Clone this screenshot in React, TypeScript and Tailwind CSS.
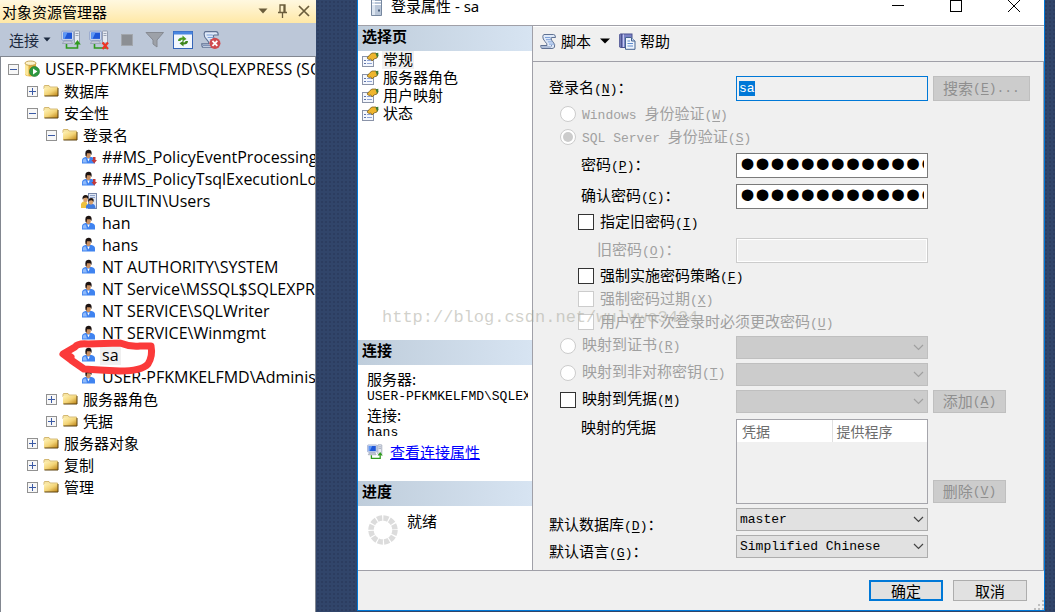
import React, { useEffect, useRef } from 'react';

const MONO = "font-['Liberation_Mono','Noto_Sans_CJK_SC',monospace] text-[13px]";

type NodeKind = 'server' | 'folder' | 'login' | 'lockedLogin' | 'group';

interface TreeNode {
  id: string;
  label: string;
  kind: NodeKind;
  level: number;
  open?: boolean;
  selected?: boolean;
}

const TREE: TreeNode[] = [
  { id: 'root', label: 'USER-PFKMKELFMD\\SQLEXPRESS (SQ', kind: 'server', level: 0, open: true },
  { id: 'db', label: '数据库', kind: 'folder', level: 1, open: false },
  { id: 'sec', label: '安全性', kind: 'folder', level: 1, open: true },
  { id: 'logins', label: '登录名', kind: 'folder', level: 2, open: true },
  { id: 'l1', label: '##MS_PolicyEventProcessing', kind: 'lockedLogin', level: 3 },
  { id: 'l2', label: '##MS_PolicyTsqlExecutionLo', kind: 'lockedLogin', level: 3 },
  { id: 'l3', label: 'BUILTIN\\Users', kind: 'group', level: 3 },
  { id: 'l4', label: 'han', kind: 'login', level: 3 },
  { id: 'l5', label: 'hans', kind: 'login', level: 3 },
  { id: 'l6', label: 'NT AUTHORITY\\SYSTEM', kind: 'login', level: 3 },
  { id: 'l7', label: 'NT Service\\MSSQL$SQLEXPR', kind: 'login', level: 3 },
  { id: 'l8', label: 'NT SERVICE\\SQLWriter', kind: 'login', level: 3 },
  { id: 'l9', label: 'NT SERVICE\\Winmgmt', kind: 'login', level: 3 },
  { id: 'l10', label: 'sa', kind: 'login', level: 3, selected: true },
  { id: 'l11', label: 'USER-PFKMKELFMD\\Adminis', kind: 'login', level: 3 },
  { id: 'roles', label: '服务器角色', kind: 'folder', level: 2, open: false },
  { id: 'cred', label: '凭据', kind: 'folder', level: 2, open: false },
  { id: 'objects', label: '服务器对象', kind: 'folder', level: 1, open: false },
  { id: 'repl', label: '复制', kind: 'folder', level: 1, open: false },
  { id: 'mgmt', label: '管理', kind: 'folder', level: 1, open: false },
];

const INDENT = ['pl-[7px]', 'pl-[26px]', 'pl-[45px]', 'pl-20'];

/* ---------- icons ---------- */

function FolderIcon() {
  return (
    <svg width="16" height="16" viewBox="0 0 16 16" className="shrink-0">
      <defs>
        <linearGradient id="folder" x1="0" y1="0" x2="1" y2="1">
          <stop offset="0" stopColor="#fff3b8" />
          <stop offset="0.5" stopColor="#f3d477" />
          <stop offset="1" stopColor="#b97f10" />
        </linearGradient>
      </defs>
      <path d="M1 3.5 L1.5 2.5 H6 L7 4 H14.5 V6 H1 Z" fill="#f6e3a0" stroke="#c9a95a" strokeWidth="0.8" />
      <rect x="1" y="4.8" width="14" height="8.2" rx="0.5" fill="url(#folder)" />
      <path d="M1.5 13 H15 V5" fill="none" stroke="#5c4310" strokeWidth="1" />
    </svg>
  );
}

function LoginIcon({ locked = false }: { locked?: boolean }) {
  return (
    <svg width="16" height="16" viewBox="0 0 16 16" className="shrink-0">
      <path d="M1 14.5 V11.5 Q1 8.6 4.5 8 H10.5 Q14 8.6 14 11.5 V14.5 Z" fill="#3f83f0" />
      <path d="M1.8 13.5 V11.5 Q2 9.6 4.5 9.2 L6 13.5 Z" fill="#8fbafa" />
      <path d="M6.3 9.5 L7.5 12.5 L8.7 9.5 Z" fill="#ffffff" />
      <ellipse cx="7.3" cy="5.8" rx="2.5" ry="3.4" fill="#c98f60" />
      <path d="M4.6 7 Q3.4 0.8 7.5 0.8 Q11.4 0.8 10.5 6 L9.2 4.2 L6 4.2 L5.5 7.5 Z" fill="#1c1210" />
      {locked && <path d="M12 8 H14.5 V11 H16 L13.2 14.5 L10.5 11 H12 Z" fill="#c13a3a" />}
    </svg>
  );
}

function GroupIcon() {
  return (
    <svg width="16" height="16" viewBox="0 0 16 16" className="shrink-0">
      <rect x="7.5" y="0.5" width="8" height="15" fill="#dfe7f5" stroke="#7686a8" />
      <path d="M9 2.5 H14 M9 4.5 H14" stroke="#8ea2c8" />
      <path d="M0 15 V11 Q1 8 5 8 L8 15 Z" fill="#eec23f" />
      <ellipse cx="4.5" cy="6" rx="2.3" ry="3.2" fill="#d9a06c" />
      <path d="M1.5 6.5 Q1 2 4.7 2 Q8 2 7.2 6 L5.5 4.6 L3 5 Z" fill="#201510" />
      <path d="M5 15.5 V13 Q5.5 11 8 11 H12 Q14.5 11.5 14.5 15.5 Z" fill="#3f7be0" />
      <ellipse cx="10" cy="8.8" rx="2.2" ry="2.8" fill="#d9a06c" />
      <path d="M7.2 9 Q7 5 10.2 5 Q13.4 5.2 12.5 9 L11 7.2 L8.6 7.4 Z" fill="#201510" />
    </svg>
  );
}

function ServerIcon() {
  return (
    <svg width="16" height="18" viewBox="0 0 16 18" className="shrink-0">
      <path d="M1 3.2 V14 Q1 16.5 6.5 16.5 Q12 16.5 12 14 V3.2 Z" fill="#dfae3c" />
      <path d="M1 3.2 V14 Q1.5 15.6 4.5 16 V5 Z" fill="#fbe79a" />
      <ellipse cx="6.5" cy="3.2" rx="5.5" ry="2.2" fill="#fdf3cc" stroke="#b9923a" strokeWidth="0.8" />
      <circle cx="10.5" cy="11.5" r="5" fill="#2e9a3f" stroke="#1f7330" strokeWidth="0.6" />
      <path d="M9 8.6 L13.4 11.5 L9 14.4 Z" fill="#ffffff" />
    </svg>
  );
}

function ComputersIcon({ mode, size = 20 }: { mode: 'connect' | 'disconnect'; size?: number }) {
  return (
    <svg width={size} height={size} viewBox="0 0 20 20" className="shrink-0">
      <rect x="13.5" y="1" width="5" height="12" rx="0.6" fill="#e6eaf2" stroke="#8690a5" strokeWidth="0.8" />
      <path d="M14.5 3.5 H17.5 M14.5 5.5 H17.5" stroke="#8690a5" strokeWidth="0.8" />
      <rect x="0.8" y="1.2" width="11.5" height="9" rx="0.8" fill="#dfe6f4" stroke="#7f93c5" strokeWidth="0.8" />
      <rect x="2.2" y="2.5" width="8.8" height="6.4" fill="#1e56d8" />
      <path d="M2.2 2.5 H6.5 L3.5 8.9 H2.2 Z" fill="#5f97f5" />
      <path d="M3 11 H10 L11.5 13.5 H1.5 Z" fill="#c5cbd9" stroke="#8690a5" strokeWidth="0.6" />
      <path d="M5.5 14 V18 H16.5 V14" fill="none" stroke="#2f9a1e" strokeWidth="1.6" />
      {mode === 'connect' ? (
        <path d="M16.5 10 L19.8 14.5 H13.2 Z" fill="#2f9a1e" />
      ) : (
        <path d="M13.5 12.5 L19 19 M19 12.5 L13.5 19" stroke="#ee3424" strokeWidth="2.2" />
      )}
    </svg>
  );
}

function RefreshIcon() {
  return (
    <svg width="20" height="20" viewBox="0 0 20 20">
      <rect x="0.5" y="1.5" width="19" height="17" fill="#f3f7fd" stroke="#3565b8" />
      <rect x="0.5" y="1.5" width="19" height="3" fill="#4a86e0" />
      <path d="M5 11 Q5 7.5 9.5 7.5 V5.5 L13.5 9 L9.5 11.5 V9.5 Q7.5 9.5 7.5 11 Z" fill="#4b9b22" />
      <path d="M15 11 Q15 14.6 10.5 14.6 V16.6 L6.5 13.2 L10.5 10.8 V12.6 Q12.5 12.6 12.5 11 Z" fill="#3c8418" />
    </svg>
  );
}

function ScrollPaths() {
  return (
    <>
      <path
        d="M4 1.5 H13.5 Q15.5 1.5 15.5 4.5 H12 L11 5 Q11 7 13 9 Q15.5 11.5 14.5 14 Q14 15.5 12 15.5 H2 Q0.7 15.5 0.7 12.5 H7 Q7.5 11 5 8.5 Q2.6 6 2.8 3.5 Q3 1.7 4 1.5 Z"
        fill="#dfe9f8"
        stroke="#5f7192"
      />
      <path d="M5 4.5 H10.5 M6 6.7 H11 M7.8 8.9 H12.6 M9 11.1 H14" stroke="#7da0d8" />
      <path d="M1.5 14 H10.5 Q12 13.5 11.5 12" fill="none" stroke="#7f93b8" />
    </>
  );
}

function ScriptIcon() {
  return (
    <svg width="17" height="17" viewBox="0 0 17 17" className="shrink-0">
      <ScrollPaths />
    </svg>
  );
}

function CancelScriptIcon() {
  return (
    <svg width="20" height="20" viewBox="0 0 18 18">
      <ScrollPaths />
      <circle cx="12.5" cy="12" r="5" fill="#cf4a4f" />
      <path d="M10.3 9.8 L14.7 14.2 M14.7 9.8 L10.3 14.2" stroke="#ffffff" strokeWidth="1.6" />
    </svg>
  );
}

function HelpIcon() {
  return (
    <svg width="17" height="17" viewBox="0 0 17 17" className="shrink-0">
      <path d="M0.5 1.5 L2 0.8 V14.6 L0.5 14 Z" fill="#8d93cf" stroke="#4b5290" strokeWidth="0.8" />
      <rect x="2.5" y="1" width="10.5" height="13.5" fill="#7b82c6" stroke="#4b5290" />
      <path d="M4.5 1.5 V14" stroke="#c3c8ee" />
      <path d="M6.5 4.5 H12.5 L16 8 V16.3 H6.5 Z" fill="#eef4fd" stroke="#44628f" />
      <path d="M12.5 4.5 V8 H16" fill="#c6d8f2" stroke="#44628f" />
      <path d="M8.5 8 H11 M8.5 10.5 H14 M8.5 13 H14" stroke="#5f8acb" />
    </svg>
  );
}

function PageIcon() {
  return (
    <svg width="17" height="16" viewBox="0 0 17 16" className="shrink-0">
      <rect x="0.5" y="4.5" width="11" height="10" fill="#f4f7fd" stroke="#8a93a8" />
      <path d="M2 8.5 H4 M2 11.5 H4" stroke="#5f74a8" />
      <path d="M5 8.5 H10 M5 11.5 H10" stroke="#8fa4d4" />
      <path d="M5 6 L8 2.5 L10 1 H14 L16 3 L15 6 L12 7 L10 9 L9 7 L7 7.5 Z" fill="#efb52e" stroke="#6f5312" strokeWidth="0.7" />
      <path d="M13.5 1.2 L16.3 0.8 V4.2 L15 5.5 Z" fill="#3f7a36" />
    </svg>
  );
}

function TowerIcon() {
  return (
    <svg width="13" height="16" viewBox="0 0 13 16" className="shrink-0">
      <path d="M1.5 0 H11.5 V15.5 H1.5 Z" fill="#b9c6d8" stroke="#76879f" />
      <path d="M2 0 H5 V15 H2 Z" fill="#dce5f0" />
      <path d="M2 1.5 H11 M2 4.5 H11" stroke="#ffffff" />
      <rect x="8" y="9.5" width="2" height="2" fill="#4a5f7d" />
    </svg>
  );
}

function Spinner() {
  return (
    <svg width="30" height="30" viewBox="0 0 30 30" className="shrink-0">
      <circle cx="15" cy="15" r="12" fill="none" stroke="#dcdcdc" strokeWidth="5.5" strokeDasharray="5.1 1.183" />
    </svg>
  );
}

function Expander({ open }: { open: boolean }) {
  return (
    <svg width="11" height="11" viewBox="0 0 11 11" className="shrink-0">
      <rect x="0.5" y="0.5" width="10" height="10" fill="#f7f7f7" stroke="#919191" />
      <path d={open ? 'M2 5.5 H9' : 'M2 5.5 H9 M5.5 2 V9'} stroke="#3b5aa5" />
    </svg>
  );
}

function NodeIcon({ kind }: { kind: NodeKind }) {
  if (kind === 'server') return <ServerIcon />;
  if (kind === 'folder') return <FolderIcon />;
  if (kind === 'group') return <GroupIcon />;
  return <LoginIcon locked={kind === 'lockedLogin'} />;
}

/* ---------- object explorer ---------- */

function ObjectExplorer() {
  return (
    <aside className="relative flex w-[316px] shrink-0 flex-col overflow-hidden bg-white font-['Open_Sans','Noto_Sans_CJK_SC',sans-serif] text-[15px] text-black">
      <header className="flex h-[23px] shrink-0 items-center bg-gradient-to-b from-[#fff8e0] to-[#ffe8a6] pl-0.5 pr-1">
        <h1 className="flex-1 leading-5">对象资源管理器</h1>
        <div className="flex items-center gap-2 pb-0.5 pr-px text-[#6b5d3c]">
          <button aria-label="窗口位置">
            <svg width="10" height="6" viewBox="0 0 10 6">
              <path d="M0.5 0.5 H9.5 L5 5.5 Z" fill="currentColor" />
            </svg>
          </button>
          <button aria-label="自动隐藏">
            <svg width="13" height="14" viewBox="0 0 13 14" fill="none" stroke="currentColor">
              <path d="M4 8.5 V1 H9 V8.5 M8 1 V8.5 M2 8.5 H11 M6.5 9 V14" strokeWidth="1.3" />
            </svg>
          </button>
          <button aria-label="关闭">
            <svg width="14" height="12" viewBox="0 0 14 12" stroke="currentColor" strokeWidth="1.7">
              <path d="M2 1 L12 11 M12 1 L2 11" />
            </svg>
          </button>
        </div>
      </header>

      <div className="flex h-[33px] shrink-0 items-center gap-2 bg-[#bcc7d8] pl-[9px]">
        <button className="flex items-center gap-1 leading-5 text-[#1b293e]">
          连接
          <svg width="8" height="5" viewBox="0 0 8 5">
            <path d="M0.5 0.5 H7.5 L4 4.5 Z" fill="currentColor" />
          </svg>
        </button>
        <div className="flex items-center gap-2 pl-0.5">
          <button aria-label="连接服务器">
            <ComputersIcon mode="connect" />
          </button>
          <button aria-label="断开连接">
            <ComputersIcon mode="disconnect" />
          </button>
          <button aria-label="停止" className="px-1">
            <svg width="12" height="12" viewBox="0 0 12 12">
              <rect x="0.5" y="0.5" width="11" height="11" fill="#8c8f94" stroke="#a3a7ad" />
            </svg>
          </button>
          <button aria-label="筛选">
            <svg width="20" height="18" viewBox="0 0 20 18">
              <path d="M1 1.5 H18.5 L12 9 V16 L8 13 V9 Z" fill="#9da1a8" stroke="#868a92" />
            </svg>
          </button>
          <button aria-label="刷新">
            <RefreshIcon />
          </button>
          <button aria-label="取消脚本">
            <CancelScriptIcon />
          </button>
        </div>
      </div>

      <ul className="flex-1 overflow-hidden border-x border-t border-l-[#828790] border-r-[#828790] border-t-[#828790] pt-px">
        {TREE.map((node) => (
          <li key={node.id} className={`flex h-[22px] items-center ${INDENT[node.level]}`}>
            {node.open !== undefined && (
              <button aria-label={node.open ? '折叠' : '展开'} className="mr-[5px] shrink-0">
                <Expander open={node.open} />
              </button>
            )}
            <NodeIcon kind={node.kind} />
            <span
              className={`ml-[3px] whitespace-nowrap px-0.5 leading-5 ${node.kind === 'folder' ? '' : 'text-[16px]'} ${node.selected ? 'bg-[#f0f0f0]' : ''}`}
            >
              {node.label}
            </span>
          </li>
        ))}
      </ul>

      {/* hand-drawn marker around the sa login */}
      <svg
        width="100"
        height="38"
        viewBox="0 0 100 38"
        className="pointer-events-none absolute left-[58px] top-[338px]"
        fill="none"
        stroke="#fb3a3a"
        strokeLinecap="round"
        strokeLinejoin="round"
      >
        <path d="M5 16 L17 9 Q20 5 30 6 L62 5 Q72 9 82 8 L93 8 Q95 18 90 26 Q84 33 62 33 Q40 32 26 31 L13 22 Z" strokeWidth="7" />
        <path d="M8 16 L13 19" strokeWidth="7" />
      </svg>
    </aside>
  );
}

/* ---------- dialog parts ---------- */

function Key({ k, colon = false }: { k: string; colon?: boolean }) {
  return (
    <>
      <span className={MONO}>
        (<u className="underline-offset-2">{k}</u>)
      </span>
      {colon && '：'}
    </>
  );
}

function Latin({ children }: { children: React.ReactNode }) {
  return <span className={`${MONO} whitespace-pre`}>{children}</span>;
}

interface ChoiceProps {
  id: string;
  type: 'radio' | 'checkbox';
  disabled?: boolean;
  checked?: boolean;
  children: React.ReactNode;
}

function Choice({ id, type, disabled = false, checked = false, children }: ChoiceProps) {
  const shape = type === 'radio' ? 'rounded-full' : '';
  const border = disabled ? 'border-[#cccccc]' : 'border-[#333333]';
  return (
    <div className={`flex h-4 items-center gap-1.5 whitespace-nowrap ${disabled ? 'text-[#a0a0a0]' : ''}`}>
      <span className="relative flex shrink-0">
        <input
          id={id}
          type={type}
          disabled={disabled}
          defaultChecked={checked}
          className={`peer size-4 appearance-none border bg-white ${shape} ${border}`}
        />
        {type === 'radio' && (
          <span className="absolute inset-[3px] hidden rounded-full bg-[#cccccc] peer-checked:block" />
        )}
      </span>
      <label htmlFor={id}>{children}</label>
    </div>
  );
}

interface RowProps {
  label: React.ReactNode;
  children: React.ReactNode;
  action?: React.ReactNode;
  align?: string;
}

function Row({ label, children, action, align = 'items-center' }: RowProps) {
  return (
    <div className={`flex ${align}`}>
      <div className="w-[187px] shrink-0 whitespace-nowrap leading-5">{label}</div>
      <div className="min-w-0 flex-1">{children}</div>
      <div className="ml-[5px] flex w-[97px] shrink-0">{action}</div>
    </div>
  );
}

function DisabledButton({ className = '', children }: { className?: string; children: React.ReactNode }) {
  return (
    <button
      disabled
      className={`flex items-center justify-center border border-[#bfbfbf] bg-[#cccccc] text-[#8f8f8f] ${className}`}
    >
      {children}
    </button>
  );
}

function Combo({ id, value, disabled = false }: { id: string; value?: string; disabled?: boolean }) {
  const look = disabled ? 'border-[#bfbfbf] bg-[#cccccc]' : 'border-[#adadad] bg-[#e1e1e1]';
  return (
    <div className="relative">
      <select
        id={id}
        disabled={disabled}
        aria-label={id}
        className={`block h-[23px] w-full appearance-none border pl-[3px] text-black ${MONO} ${look}`}
      >
        {value && <option>{value}</option>}
      </select>
      <svg
        width="11"
        height="7"
        viewBox="0 0 11 7"
        className={`pointer-events-none absolute right-1 top-2 ${disabled ? 'text-[#a0a0a0]' : 'text-[#444444]'}`}
      >
        <path d="M1 1 L5.5 5.5 L10 1" fill="none" stroke="currentColor" strokeWidth="1.2" />
      </svg>
    </div>
  );
}

function PasswordBox({ id }: { id: string }) {
  return (
    <input
      id={id}
      type="password"
      defaultValue="***************"
      className="block h-[25px] w-full border border-[#7a7a7a] bg-white px-[3px] pb-1 font-['Liberation_Sans',sans-serif] text-[43px] leading-[19px]"
    />
  );
}

function SectionTitle({ children }: { children: React.ReactNode }) {
  return (
    <h2 className="h-[25px] bg-gradient-to-r from-[#bfcddb] to-[#d7e4f2] pl-1 font-bold leading-5">
      {children}
    </h2>
  );
}

const PAGES = ['常规', '服务器角色', '用户映射', '状态'];

function Sidebar() {
  return (
    <nav className="flex w-[175px] shrink-0 flex-col border-r border-[#a0a0a8] bg-white">
      <section className="flex-1">
        <SectionTitle>选择页</SectionTitle>
        <ul>
          {PAGES.map((page, i) => (
            <li key={page} className="flex h-[18px] items-center gap-[3px] pl-1">
              <PageIcon />
              <a href="#" className={`px-px pb-0.5 leading-4 ${i === 0 ? 'bg-[#f0f0f0]' : ''}`}>
                {page}
              </a>
            </li>
          ))}
        </ul>
      </section>

      <section className="h-[141px] shrink-0">
        <SectionTitle>连接</SectionTitle>
        <dl className="overflow-hidden pl-[9px] pr-1 pt-[5px] leading-[18px]">
          <dt>服务器:</dt>
          <dd className={`overflow-hidden whitespace-nowrap leading-[18px] ${MONO}`}>USER-PFKMKELFMD\SQLEX</dd>
          <dt>连接:</dt>
          <dd className={`leading-[18px] ${MONO}`}>hans</dd>
        </dl>
        <div className="flex items-center gap-[7px] pl-[9px]">
          <ComputersIcon mode="connect" size={16} />
          <a href="#" className="leading-5 text-[#0000ff] underline">
            查看连接属性
          </a>
        </div>
      </section>

      <section className="h-[89px] shrink-0">
        <SectionTitle>进度</SectionTitle>
        <div className="flex items-start gap-[9px] pl-2.5 pt-1">
          <div className="pt-[5px]">
            <Spinner />
          </div>
          <span className="leading-[22px]">就绪</span>
        </div>
      </section>
    </nav>
  );
}

function GeneralForm() {
  const nameRef = useRef<HTMLInputElement>(null);

  useEffect(() => {
    nameRef.current?.focus();
    nameRef.current?.select();
  }, []);

  return (
    <form
      className="flex-1 border-r border-[#a0a0a8] pb-1 pl-4 pr-[13px] pt-[14px]"
      onSubmit={(e) => e.preventDefault()}
    >
      <Row
        label={
          <label htmlFor="name">
            登录名
            <Key k="N" colon />
          </label>
        }
        action={
          <DisabledButton className="h-[25px] w-full">
            搜索
            <Key k="E" />
            <Latin>...</Latin>
          </DisabledButton>
        }
      >
        <input
          ref={nameRef}
          id="name"
          readOnly
          defaultValue="sa"
          className={`block h-[25px] w-full border border-[#0078d7] bg-[#f0f0f0] px-0.5 outline-none selection:bg-[#0078d7] selection:text-white ${MONO}`}
        />
      </Row>

      <div className="flex flex-col gap-[7px] pb-2 pl-[11px] pt-[5px] leading-4">
        <Choice id="auth-win" type="radio" disabled>
          <Latin>Windows </Latin>身份验证
          <Key k="W" />
        </Choice>
        <Choice id="auth-sql" type="radio" disabled checked>
          <Latin>SQL Server </Latin>身份验证
          <Key k="S" />
        </Choice>
      </div>

      <div className="flex flex-col gap-1.5">
        <Row
          label={
            <label htmlFor="pwd" className="pl-8">
              密码
              <Key k="P" colon />
            </label>
          }
        >
          <PasswordBox id="pwd" />
        </Row>
        <Row
          label={
            <label htmlFor="confirm" className="pl-8">
              确认密码
              <Key k="C" colon />
            </label>
          }
        >
          <PasswordBox id="confirm" />
        </Row>
      </div>

      <div className="pb-2 pl-[29px] pt-[5px] leading-4">
        <Choice id="use-old" type="checkbox">
          指定旧密码
          <Key k="I" />
        </Choice>
      </div>

      <div className="text-[#a0a0a0]">
        <Row
          label={
            <label htmlFor="old" className="pl-12">
              旧密码
              <Key k="O" colon />
            </label>
          }
        >
          <input
            id="old"
            type="password"
            disabled
            className="block h-[25px] w-full border border-[#cccccc] bg-[#f0f0f0] shadow-[inset_0_0_0_1px_#ffffff]"
          />
        </Row>
      </div>

      <div className="flex flex-col gap-[7px] pb-1.5 pl-[29px] pt-[5px] leading-4">
        <Choice id="policy" type="checkbox">
          强制实施密码策略
          <Key k="F" />
        </Choice>
        <Choice id="expire" type="checkbox" disabled>
          强制密码过期
          <Key k="X" />
        </Choice>
        <Choice id="must-change" type="checkbox" disabled>
          用户在下次登录时必须更改密码
          <Key k="U" />
        </Choice>
      </div>

      <div className="flex flex-col gap-1">
        <Row
          label={
            <div className="pb-1 pl-[11px]">
              <Choice id="map-cert" type="radio" disabled>
                映射到证书
                <Key k="R" />
              </Choice>
            </div>
          }
        >
          <Combo id="cert" disabled />
        </Row>
        <Row
          label={
            <div className="pb-1 pl-[11px]">
              <Choice id="map-key" type="radio" disabled>
                映射到非对称密钥
                <Key k="T" />
              </Choice>
            </div>
          }
        >
          <Combo id="key" disabled />
        </Row>
        <Row
          label={
            <div className="pb-1 pl-[11px]">
              <Choice id="map-cred" type="checkbox">
                映射到凭据
                <Key k="M" />
              </Choice>
            </div>
          }
          action={
            <DisabledButton className="h-[23px] w-[73px]">
              添加
              <Key k="A" />
            </DisabledButton>
          }
        >
          <Combo id="credential" disabled />
        </Row>
      </div>

      <div className="pb-1 pt-1.5">
        <Row
          align="items-stretch"
          label={<div className="pl-8 leading-4">映射的凭据</div>}
          action={
            <DisabledButton className="mb-px h-[23px] w-[73px] self-end">
              删除
              <Key k="V" />
            </DisabledButton>
          }
        >
          <div className="h-[85px] border border-[#a5a5ab] bg-[#f0f0f0]">
            <table className="w-full table-fixed text-left text-[14px] text-[#6d6d6d]">
              <thead>
                <tr className="h-[22px] bg-white leading-[22px]">
                  <th className="border-r border-[#e0e0e0] pl-[5px] font-normal">凭据</th>
                  <th className="pl-1 font-normal">提供程序</th>
                </tr>
              </thead>
              <tbody />
            </table>
          </div>
        </Row>
      </div>

      <div className="flex flex-col">
        <Row
          align="items-start"
          label={
            <label htmlFor="default-db" className="block h-[27px] pt-1.5">
              默认数据库
              <Key k="D" colon />
            </label>
          }
        >
          <Combo id="default-db" value="master" />
        </Row>
        <Row
          align="items-start"
          label={
            <label htmlFor="default-lang" className="block h-[27px] pt-1.5">
              默认语言
              <Key k="G" colon />
            </label>
          }
        >
          <Combo id="default-lang" value="Simplified Chinese" />
        </Row>
      </div>
    </form>
  );
}

function LoginDialog() {
  return (
    <main className="relative mb-px ml-[41px] mr-[10px] flex min-w-0 flex-1 flex-col border-x border-b border-[#0078d7] bg-[#f0f0f0] font-['Noto_Sans_CJK_SC',sans-serif] text-[15px] text-black">
      <header className="flex h-[26px] shrink-0 items-start gap-2 overflow-hidden border-b border-[#a0a0a8] bg-white pl-3 pr-6 font-['Noto_Sans','Noto_Sans_CJK_SC',sans-serif]">
        <TowerIcon />
        <h1 className="flex-1 leading-[13px]">登录属性 - sa</h1>
        <div className="flex gap-[46px]">
          <button aria-label="最小化">
            <svg width="12" height="12" viewBox="0 0 12 12" stroke="#000">
              <path d="M0 5.5 H12" />
            </svg>
          </button>
          <button aria-label="最大化">
            <svg width="12" height="12" viewBox="0 0 12 12" fill="none" stroke="#000">
              <rect x="0.5" y="0.5" width="11" height="11" />
            </svg>
          </button>
          <button aria-label="关闭">
            <svg width="12" height="12" viewBox="0 0 12 12" stroke="#000">
              <path d="M0 0 L12 12 M12 0 L0 12" />
            </svg>
          </button>
        </div>
      </header>

      <div className="flex flex-1 border-b border-[#a0a0a8]">
        <Sidebar />
        <div className="flex min-w-0 flex-1 flex-col">
          <div className="flex h-9 shrink-0 items-center border-b border-t border-b-[#a0a0a8] border-t-white pb-1.5 pl-[7px]">
            <button className="flex items-center gap-1 leading-5">
              <ScriptIcon />
              脚本
            </button>
            <button aria-label="脚本选项" className="px-[9px]">
              <svg width="10" height="6" viewBox="0 0 10 6">
                <path d="M0 0.5 H10 L5 5.5 Z" />
              </svg>
            </button>
            <button className="flex items-center gap-1 leading-5">
              <HelpIcon />
              帮助
            </button>
          </div>
          <GeneralForm />
        </div>
      </div>

      <footer className="flex h-[39px] shrink-0 items-center justify-end gap-2.5 pr-[17px]">
        <button className="h-[21px] w-[74px] border-2 border-[#0078d7] bg-[#e1e1e1] leading-[17px]">确定</button>
        <button className="h-[21px] w-[74px] border border-[#adadad] bg-[#e1e1e1] leading-[19px]">取消</button>
      </footer>

      <svg width="10" height="10" viewBox="0 0 10 10" className="absolute bottom-0 right-0" fill="#bfbfbf">
        <path d="M8 0 H10 V2 H8 Z M4 4 H6 V6 H4 Z M8 4 H10 V6 H8 Z M0 8 H2 V10 H0 Z M4 8 H6 V10 H4 Z M8 8 H10 V10 H8 Z" />
      </svg>

      <p className="pointer-events-none absolute left-6 top-[306px] font-['Liberation_Mono',monospace] text-[17px] leading-6 text-[#a4a498]/50">
        http://blog.csdn.net/wulvwo3424
      </p>
    </main>
  );
}

export default function App() {
  return (
    <div className="flex min-h-screen bg-[#31456a] bg-[radial-gradient(#2c3d60_1px,transparent_1px)] bg-[size:4px_4px]">
      <ObjectExplorer />
      <LoginDialog />
    </div>
  );
}
